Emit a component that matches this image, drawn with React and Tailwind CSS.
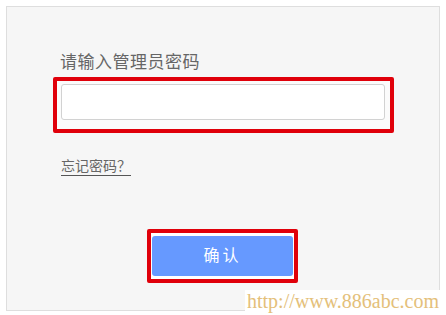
import React from "react";

const App = () => {
  return (
    <div
      className="relative w-[446px] h-[315px] bg-white overflow-hidden"
      style={{ fontFamily: '"Liberation Sans", "Noto Sans CJK SC", sans-serif' }}
    >
      <div className="ml-[6px] mt-[6px] w-[434px] h-[305px] border border-[#dedede] bg-[#f6f6f6] pl-[46px] pt-[44px]">
        <div className="ml-[7px] text-[17px] leading-[24px] text-[#666] tracking-[0.5px]">
          请输入管理员密码
        </div>
        <div className="mt-[2px] box-border w-[341px] h-[56px] border-4 border-[#e0000a] rounded-[2px] pt-[3px] pl-[4px] bg-[#fbfbfb]">
          <input
            type="password"
            className="block box-border w-[324px] h-[36px] border border-[#d2d2d2] rounded-[3px] bg-white outline-none px-2"
          />
        </div>
        <a
          href="#"
          className="inline-block mt-[22px] ml-[8px] text-[14px] leading-[20px] text-[#666] underline underline-offset-[4px] decoration-[#555]"
          style={{ fontFamily: '"Noto Sans CJK SC", sans-serif' }}
        >
          忘记密码？
        </a>
        <div className="ml-[94px] mt-[51px] box-border w-[151px] h-[54px] border-4 border-[#e0000a] rounded-[2px] bg-white px-[1px] pt-[3px]">
          <button className="block w-[141px] h-[40px] rounded-[3px] bg-[#6699ff] text-white text-[16px] tracking-[3px]">
            确认
          </button>
        </div>
      </div>
      <div
        className="absolute right-0 bottom-0 w-[201px] h-[25px] bg-white pl-[2px] text-[20px] leading-[22px] text-[#e4c07a]"
        style={{ fontFamily: '"Liberation Serif", serif' }}
      >
        http://www.886abc.com
      </div>
    </div>
  );
};

export default App;
